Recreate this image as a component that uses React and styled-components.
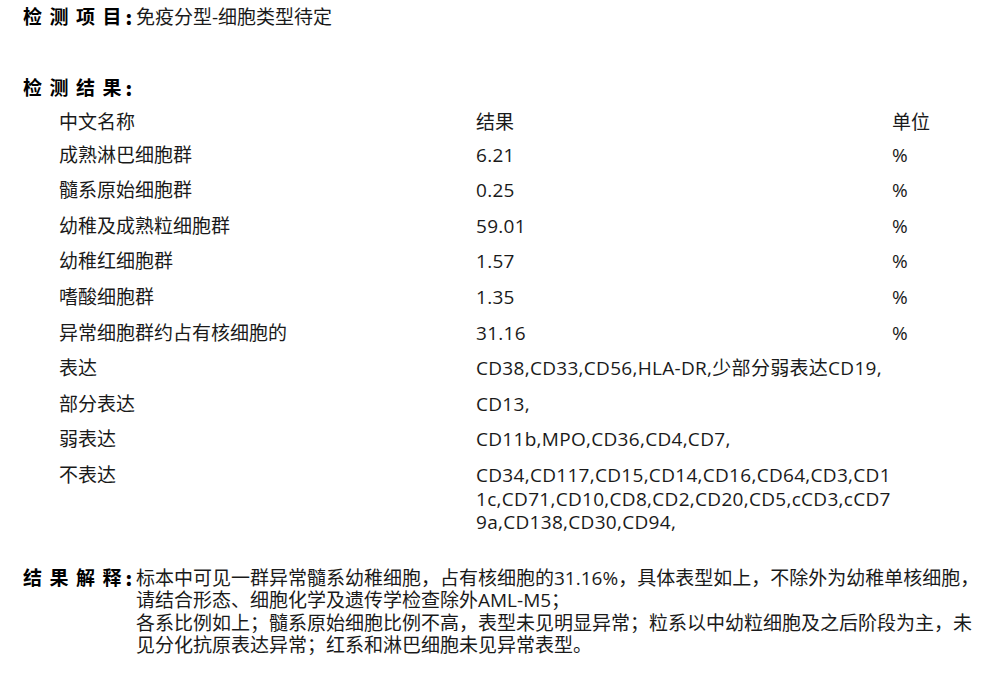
import React from "react";
import styled, { createGlobalStyle } from "styled-components";

const Global = createGlobalStyle`
  html, body { margin: 0; padding: 0; background: #fff; }
  body {
    font-family: "Open Sans", "Noto Sans CJK SC", sans-serif;
    font-size: 19px;
    color: #1a1a1a;
  }
`;

const Page = styled.div`
  padding: 5px 0 0 23px;
`;

const InfoLine = styled.div`
  display: flex;
  align-items: baseline;
  line-height: 24px;
  margin-top: ${(p) => p.$top || 0}px;
`;

const Label = styled.span`
  flex: 0 0 auto;
  display: inline-flex;
  width: ${(p) => (p.$fixed ? "113px" : "auto")};
  font-weight: 700;
  color: #000;
  white-space: pre;
`;

const LabelText = styled.span`
  word-spacing: 2.6px;
`;

const Colon = styled.span`
  display: inline-block;
  width: 10px;
  padding-left: 4px;
  font-family: "Noto Sans CJK SC", sans-serif;
  font-weight: 900;
`;

const Value = styled.span`
  flex: 1 1 auto;
`;

const Table = styled.div`
  margin-left: 36px;
  display: flex;
  flex-direction: column;
`;

const Row = styled.div`
  display: grid;
  grid-template-columns: 417px 416px 1fr;
  line-height: 23.6px;
  padding: ${(p) => (p.$head ? "11.2px 0 3.4px" : "6px 0")};
`;

const Cell = styled.div`
  word-break: break-all;
  letter-spacing: ${(p) => (p.$wrap ? "0.3px" : "0")};
`;

const Interp = styled.div`
  display: flex;
  align-items: flex-start;
  margin-top: 26px;
  line-height: 22.4px;
`;

const InterpText = styled.div`
  flex: 1 1 auto;
`;

const rows = [
  ["成熟淋巴细胞群", "6.21", "%"],
  ["髓系原始细胞群", "0.25", "%"],
  ["幼稚及成熟粒细胞群", "59.01", "%"],
  ["幼稚红细胞群", "1.57", "%"],
  ["嗜酸细胞群", "1.35", "%"],
  ["异常细胞群约占有核细胞的", "31.16", "%"],
  ["表达", "CD38,CD33,CD56,HLA-DR,少部分弱表达CD19,", ""],
  ["部分表达", "CD13,", ""],
  ["弱表达", "CD11b,MPO,CD36,CD4,CD7,", ""],
  [
    "不表达",
    "CD34,CD117,CD15,CD14,CD16,CD64,CD3,CD11c,CD71,CD10,CD8,CD2,CD20,CD5,cCD3,cCD79a,CD138,CD30,CD94,",
    "",
  ],
];

function FieldLabel({ text, fixed }) {
  return (
    <Label $fixed={fixed}>
      <LabelText>{text}</LabelText>
      <Colon>:</Colon>
    </Label>
  );
}

export default function App() {
  return (
    <>
      <Global />
      <Page>
        <InfoLine>
          <FieldLabel text="检 测 项 目" fixed />
          <Value>免疫分型-细胞类型待定</Value>
        </InfoLine>
        <InfoLine $top={46.5}>
          <FieldLabel text="检 测 结 果" />
        </InfoLine>
        <Table>
          <Row $head>
            <Cell>中文名称</Cell>
            <Cell>结果</Cell>
            <Cell>单位</Cell>
          </Row>
          {rows.map(([name, result, unit]) => (
            <Row key={name}>
              <Cell>{name}</Cell>
              <Cell $wrap>{result}</Cell>
              <Cell>{unit}</Cell>
            </Row>
          ))}
        </Table>
        <Interp>
          <FieldLabel text="结 果 解 释" fixed />
          <InterpText>
            标本中可见一群异常髓系幼稚细胞，占有核细胞的31.16%，具体表型如上，不除外为幼稚单核细胞，请结合形态、细胞化学及遗传学检查除外AML-M5；
            <br />
            各系比例如上；髓系原始细胞比例不高，表型未见明显异常；粒系以中幼粒细胞及之后阶段为主，未见分化抗原表达异常；红系和淋巴细胞未见异常表型。
          </InterpText>
        </Interp>
      </Page>
    </>
  );
}
